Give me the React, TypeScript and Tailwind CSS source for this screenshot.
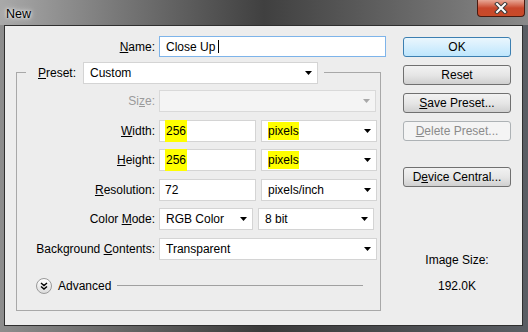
import React from "react";

function Arrow({ disabled }: { disabled?: boolean }) {
  return (
    <svg width="7" height="4" viewBox="0 0 7 4" className="shrink-0">
      <polygon points="0,0 7,0 3.5,4" fill={disabled ? "#a8a8a8" : "#000"} />
    </svg>
  );
}

function Select({ w, value, disabled, hl }: { w: string; value?: string; disabled?: boolean; hl?: boolean }) {
  return (
    <div
      className={
        "flex h-[22px] items-center justify-between border pl-[6px] pr-[5px] " +
        w +
        (disabled ? " border-[#d9d9d9] bg-[#f4f4f4]" : " border-[#d4d4d4] bg-white")
      }
    >
      <span>{hl ? <span className="bg-[#ffff00] py-[2px]">{value}</span> : value}</span>
      <Arrow disabled={disabled} />
    </div>
  );
}

function Field({ w, value, hl }: { w: string; value: string; hl?: boolean }) {
  return (
    <div className={"flex h-[22px] items-center border border-[#d4d4d4] bg-white pl-[5px] " + w}>
      {hl ? <span className="bg-[#ffff00] px-[1px] py-[2px]">{value}</span> : value}
    </div>
  );
}

function Row({ label, children }: { label: React.ReactNode; children: React.ReactNode }) {
  return (
    <div className="flex h-[22px] items-center">
      <div className="w-[138px] text-right">{label}</div>
      <div className="ml-[4px] flex gap-[5px]">{children}</div>
    </div>
  );
}

function Btn({ children, primary, disabled }: { children: React.ReactNode; primary?: boolean; disabled?: boolean }) {
  const cls = primary
    ? "border-[#3c7fb1] bg-gradient-to-b from-[#eaf6fd] to-[#bee6fd]"
    : disabled
      ? "border-[#adb2b5] bg-[#f4f4f4] text-[#8b8b8b]"
      : "border-[#707070] bg-gradient-to-b from-[#f2f2f2] via-[#e6e6e6] to-[#d0d0d0]";
  return (
    <div className={"flex h-[20px] w-[108px] items-center justify-center rounded-[3px] border " + cls}>{children}</div>
  );
}

export default function App() {
  return (
    <div className="flex h-[332px] w-[528px] flex-col bg-gradient-to-r from-[#8d8d8d] via-[#3a3a3a] to-[#5a5e64] font-['Liberation_Sans',sans-serif] text-[12px] text-black">
      <div className="relative flex h-[25px] shrink-0 bg-gradient-to-r from-[#a9a9a9] via-[#404040] to-[#8a8a8a]">
        <span className="ml-[6px] mt-[5px] text-[12.5px] [text-shadow:0_0_6px_#fff,0_0_3px_#fff]">New</span>
        <div className="absolute right-[3px] top-0 flex h-[17px] w-[48px] items-center justify-center rounded-b-[4px] border border-t-0 border-[#4a1a10] bg-gradient-to-b from-[#e7a796] via-[#c8472c] to-[#c94a28]">
          <svg width="14" height="12" viewBox="0 0 14 12">
            <path d="M3 2 L11 10 M11 2 L3 10" stroke="#3a3a3a" strokeWidth="4" strokeLinecap="square" />
            <path d="M3 2 L11 10 M11 2 L3 10" stroke="#fff" strokeWidth="2" strokeLinecap="square" />
          </svg>
        </div>
      </div>
      <div className="flex flex-1 pb-[6px] pl-[4px] pr-[5px]">
        <div className="flex flex-1 border border-[#2f2f2f] bg-[#ededed]">
          {/* left column */}
          <div className="flex w-[381px] flex-col pt-[10px]">
            <div className="flex h-[21px] items-center">
              <div className="w-[150px] text-right">
                <u>N</u>ame:
              </div>
              <div className="ml-[4px] flex h-[21px] w-[227px] items-center border border-[#7eb4ea] bg-white pl-[6px]">
                Close Up <span className="ml-[3px] inline-block h-[13px] w-[1px] bg-black" />
              </div>
            </div>
            <fieldset className="ml-[11px] mt-[5px] w-[365px] border border-[#a8a8a8] pb-[16px]">
              <legend className="ml-[9px] flex h-[21px] items-center pl-[12px] pr-[6px]">
                <div className="w-[45px]">
                  <u>P</u>reset:
                </div>
                <Select w="w-[235px] h-[21px]" value="Custom" />
              </legend>
              <div className="mt-[7px] flex flex-col gap-[7.5px]">
                <Row
                  label={
                    <span className="text-[#9a9a9a]">
                      Si<u>z</u>e:
                    </span>
                  }
                >
                  <Select w="w-[217px]" disabled />
                </Row>
                <Row
                  label={
                    <>
                      <u>W</u>idth:
                    </>
                  }
                >
                  <Field w="w-[97px]" value="256" hl />
                  <Select w="w-[116px]" value="pixels" hl />
                </Row>
                <Row
                  label={
                    <>
                      <u>H</u>eight:
                    </>
                  }
                >
                  <Field w="w-[97px]" value="256" hl />
                  <Select w="w-[116px]" value="pixels" hl />
                </Row>
                <Row
                  label={
                    <>
                      <u>R</u>esolution:
                    </>
                  }
                >
                  <Field w="w-[97px]" value="72" />
                  <Select w="w-[116px]" value="pixels/inch" />
                </Row>
                <Row
                  label={
                    <>
                      Color <u>M</u>ode:
                    </>
                  }
                >
                  <Select w="w-[94px]" value="RGB Color" />
                  <Select w="w-[116px]" value="8 bit" />
                </Row>
                <Row
                  label={
                    <>
                      Background <u>C</u>ontents:
                    </>
                  }
                >
                  <Select w="w-[218px]" value="Transparent" />
                </Row>
              </div>
              <div className="mt-[18px] flex h-[16px] items-center pl-[19px]">
                <div className="flex h-[16px] w-[16px] items-center justify-center rounded-full border border-[#9a9a9a] bg-gradient-to-b from-white to-[#dcdcdc]">
                  <svg width="8" height="8" viewBox="0 0 8 8">
                    <path d="M1 1 L4 3.5 L7 1 M1 4.5 L4 7 L7 4.5" stroke="#000" strokeWidth="1.4" fill="none" />
                  </svg>
                </div>
                <span className="ml-[6px]">Advanced</span>
                <div className="ml-[6px] h-[1px] w-[246px] bg-[#a0a0a0]" />
              </div>
            </fieldset>
          </div>
          {/* right column */}
          <div className="ml-[17px] flex w-[108px] flex-col pt-[11px]">
            <div className="flex flex-col gap-[8px]">
              <Btn primary>OK</Btn>
              <Btn>Reset</Btn>
              <Btn>
                <span>
                  <u>S</u>ave Preset...
                </span>
              </Btn>
              <Btn disabled>
                <span>
                  <u>D</u>elete Preset...
                </span>
              </Btn>
            </div>
            <div className="mt-[26px]">
              <Btn>
                <span>
                  D<u>e</u>vice Central...
                </span>
              </Btn>
            </div>
            <div className="mt-[64px] text-center">Image Size:</div>
            <div className="mt-[8px] text-center">192.0K</div>
          </div>
        </div>
      </div>
    </div>
  );
}
